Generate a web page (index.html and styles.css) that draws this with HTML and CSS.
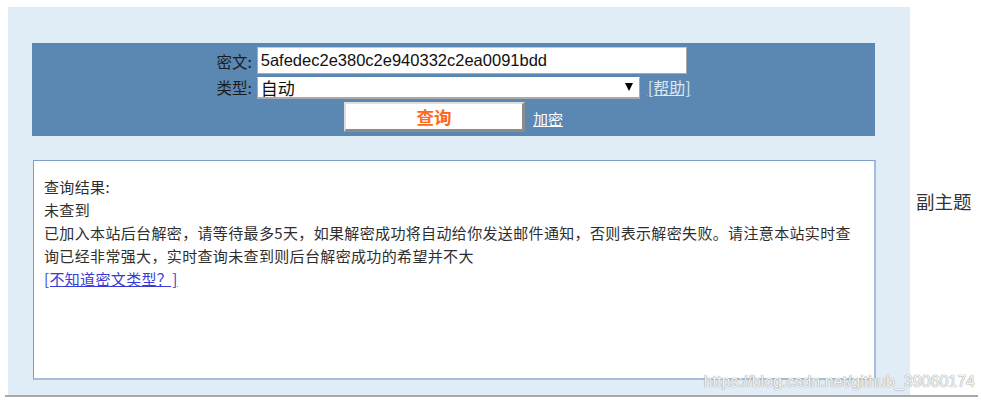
FILE: index.html
```html
<!DOCTYPE html>
<html lang="zh-CN">
<head>
<meta charset="utf-8">
<title>密文查询</title>
<link rel="stylesheet" href="styles.css">
</head>
<body>
<div class="page">
  <div class="panel">
    <div class="bar">
      <div class="form">
        <label class="lbl">密文:</label>
        <input class="cipher" type="text" value="5afedec2e380c2e940332c2ea0091bdd">
        <label class="lbl">类型:</label>
        <div class="typecell">
          <span class="selwrap">
            <select class="sel"><option>自动</option></select>
          </span>
          <a class="help" href="#">[帮助]</a>
        </div>
      </div>
      <div class="actions">
        <button class="btn" type="button">查询</button>
        <a class="enc" href="#">加密</a>
      </div>
    </div>
    <div class="result">
      <p>查询结果:</p>
      <p>未查到</p>
      <p>已加入本站后台解密，请等待最多5天，如果解密成功将自动给你发送邮件通知，否则表示解密失败。请注意本站实时查询已经非常强大，实时查询未查到则后台解密成功的希望并不大</p>
      <p><a class="link" href="#">[不知道密文类型？]</a></p>
    </div>
  </div>
  <div class="side">副主题</div>
</div>
<div class="watermark">https://blog.csdn.net/github_39060174</div>
</body>
</html>
```

FILE: styles.css
```css
html, body {
  margin: 0;
  padding: 0;
  background: #ffffff;
}
body {
  font-family: "Noto Sans CJK SC", "Noto Sans", sans-serif;
  color: #333333;
  position: relative;
  width: 981px;
  height: 402px;
  overflow: hidden;
}
.page {
  display: flex;
  align-items: center;
  margin: 7px 3px 0 5px;
  padding-left: 3px;
  border-bottom: 2px solid #a8a8a8;
}
.panel {
  width: 902px;
  height: 388px;
  box-sizing: border-box;
  padding: 36px 0 0 24px;
  background: #e1edf6;
}
.bar {
  width: 843px;
  height: 93px;
  box-sizing: border-box;
  padding: 4px 0;
  background: #5b87b3;
  display: flex;
  flex-direction: column;
  align-items: center;
}
.form {
  display: grid;
  grid-template-columns: auto auto;
  column-gap: 5px;
  row-gap: 2px;
  align-items: center;
}
.lbl {
  font-size: 15.5px;
  color: #1c1c1c;
  text-align: right;
  line-height: 20px;
}
.cipher {
  width: 430px;
  height: 27px;
  box-sizing: border-box;
  margin: 0;
  padding: 0 3px;
  border: 1px solid #a9a9a9;
  border-top-color: #c8c8c8;
  background: #fff;
  font-family: "Liberation Sans", Arial, sans-serif;
  font-size: 16.5px;
  color: #111;
  outline: none;
}
.typecell {
  display: flex;
  align-items: center;
}
.selwrap {
  position: relative;
  display: block;
  width: 383px;
  height: 22px;
}
.selwrap::after {
  content: "";
  position: absolute;
  right: 7px;
  top: 7px;
  border-left: 4px solid transparent;
  border-right: 4px solid transparent;
  border-top: 8px solid #000;
}
.sel {
  -webkit-appearance: none;
  appearance: none;
  width: 383px;
  height: 22px;
  box-sizing: border-box;
  margin: 0;
  padding: 0 0 0 3px;
  border: 1px solid #a9a9a9;
  border-top-color: #ffffff;
  border-bottom: 2px solid #a9a9a9;
  border-radius: 0;
  background: #fff;
  font-family: "Noto Sans CJK SC", sans-serif;
  font-size: 17px;
  line-height: 20px;
  color: #111;
  outline: none;
}
.help {
  margin-left: 8px;
  font-size: 16px;
  line-height: 20px;
  color: #dce8f4;
  text-decoration: underline;
}
.actions {
  margin-top: 4px;
  display: flex;
  align-items: center;
}
.btn {
  width: 181px;
  height: 30px;
  box-sizing: border-box;
  margin: 0;
  padding: 0;
  background: #ffffff;
  border-style: solid;
  border-width: 2px 3px 3px 2px;
  border-color: #dedede #8c8c8c #8c8c8c #dedede;
  font-family: "Noto Sans CJK SC", sans-serif;
  font-size: 17.5px;
  font-weight: bold;
  color: #ff6a1a;
  line-height: 24px;
}
.enc {
  margin-left: 8px;
  margin-top: 3px;
  font-size: 15px;
  color: #ffffff;
  text-decoration: underline;
}
.result {
  width: 843px;
  height: 220px;
  box-sizing: border-box;
  margin: 24px 0 0 1px;
  padding: 14px 10px 0 10px;
  background: #ffffff;
  border: 1px solid #7f9fc9;
  border-right: 2px solid #a3bddb;
  border-bottom: 2px solid #a3bddb;
  font-size: 15px;
  letter-spacing: 0.35px;
  line-height: 23px;
  color: #2e2e2e;
}
.result p {
  margin: 0;
}
.link {
  color: #3a3ad6;
  text-decoration: underline;
}
.side {
  margin-left: 6px;
  font-size: 18.5px;
  color: #333;
}
.watermark {
  position: absolute;
  right: 6px;
  top: 373px;
  font-family: "Liberation Sans", Arial, sans-serif;
  font-size: 16px;
  letter-spacing: 0;
  color: #f4f4f4;
  text-shadow: 0 0 1px #9a9a9a, 0 0 1px #9a9a9a;
}
```
